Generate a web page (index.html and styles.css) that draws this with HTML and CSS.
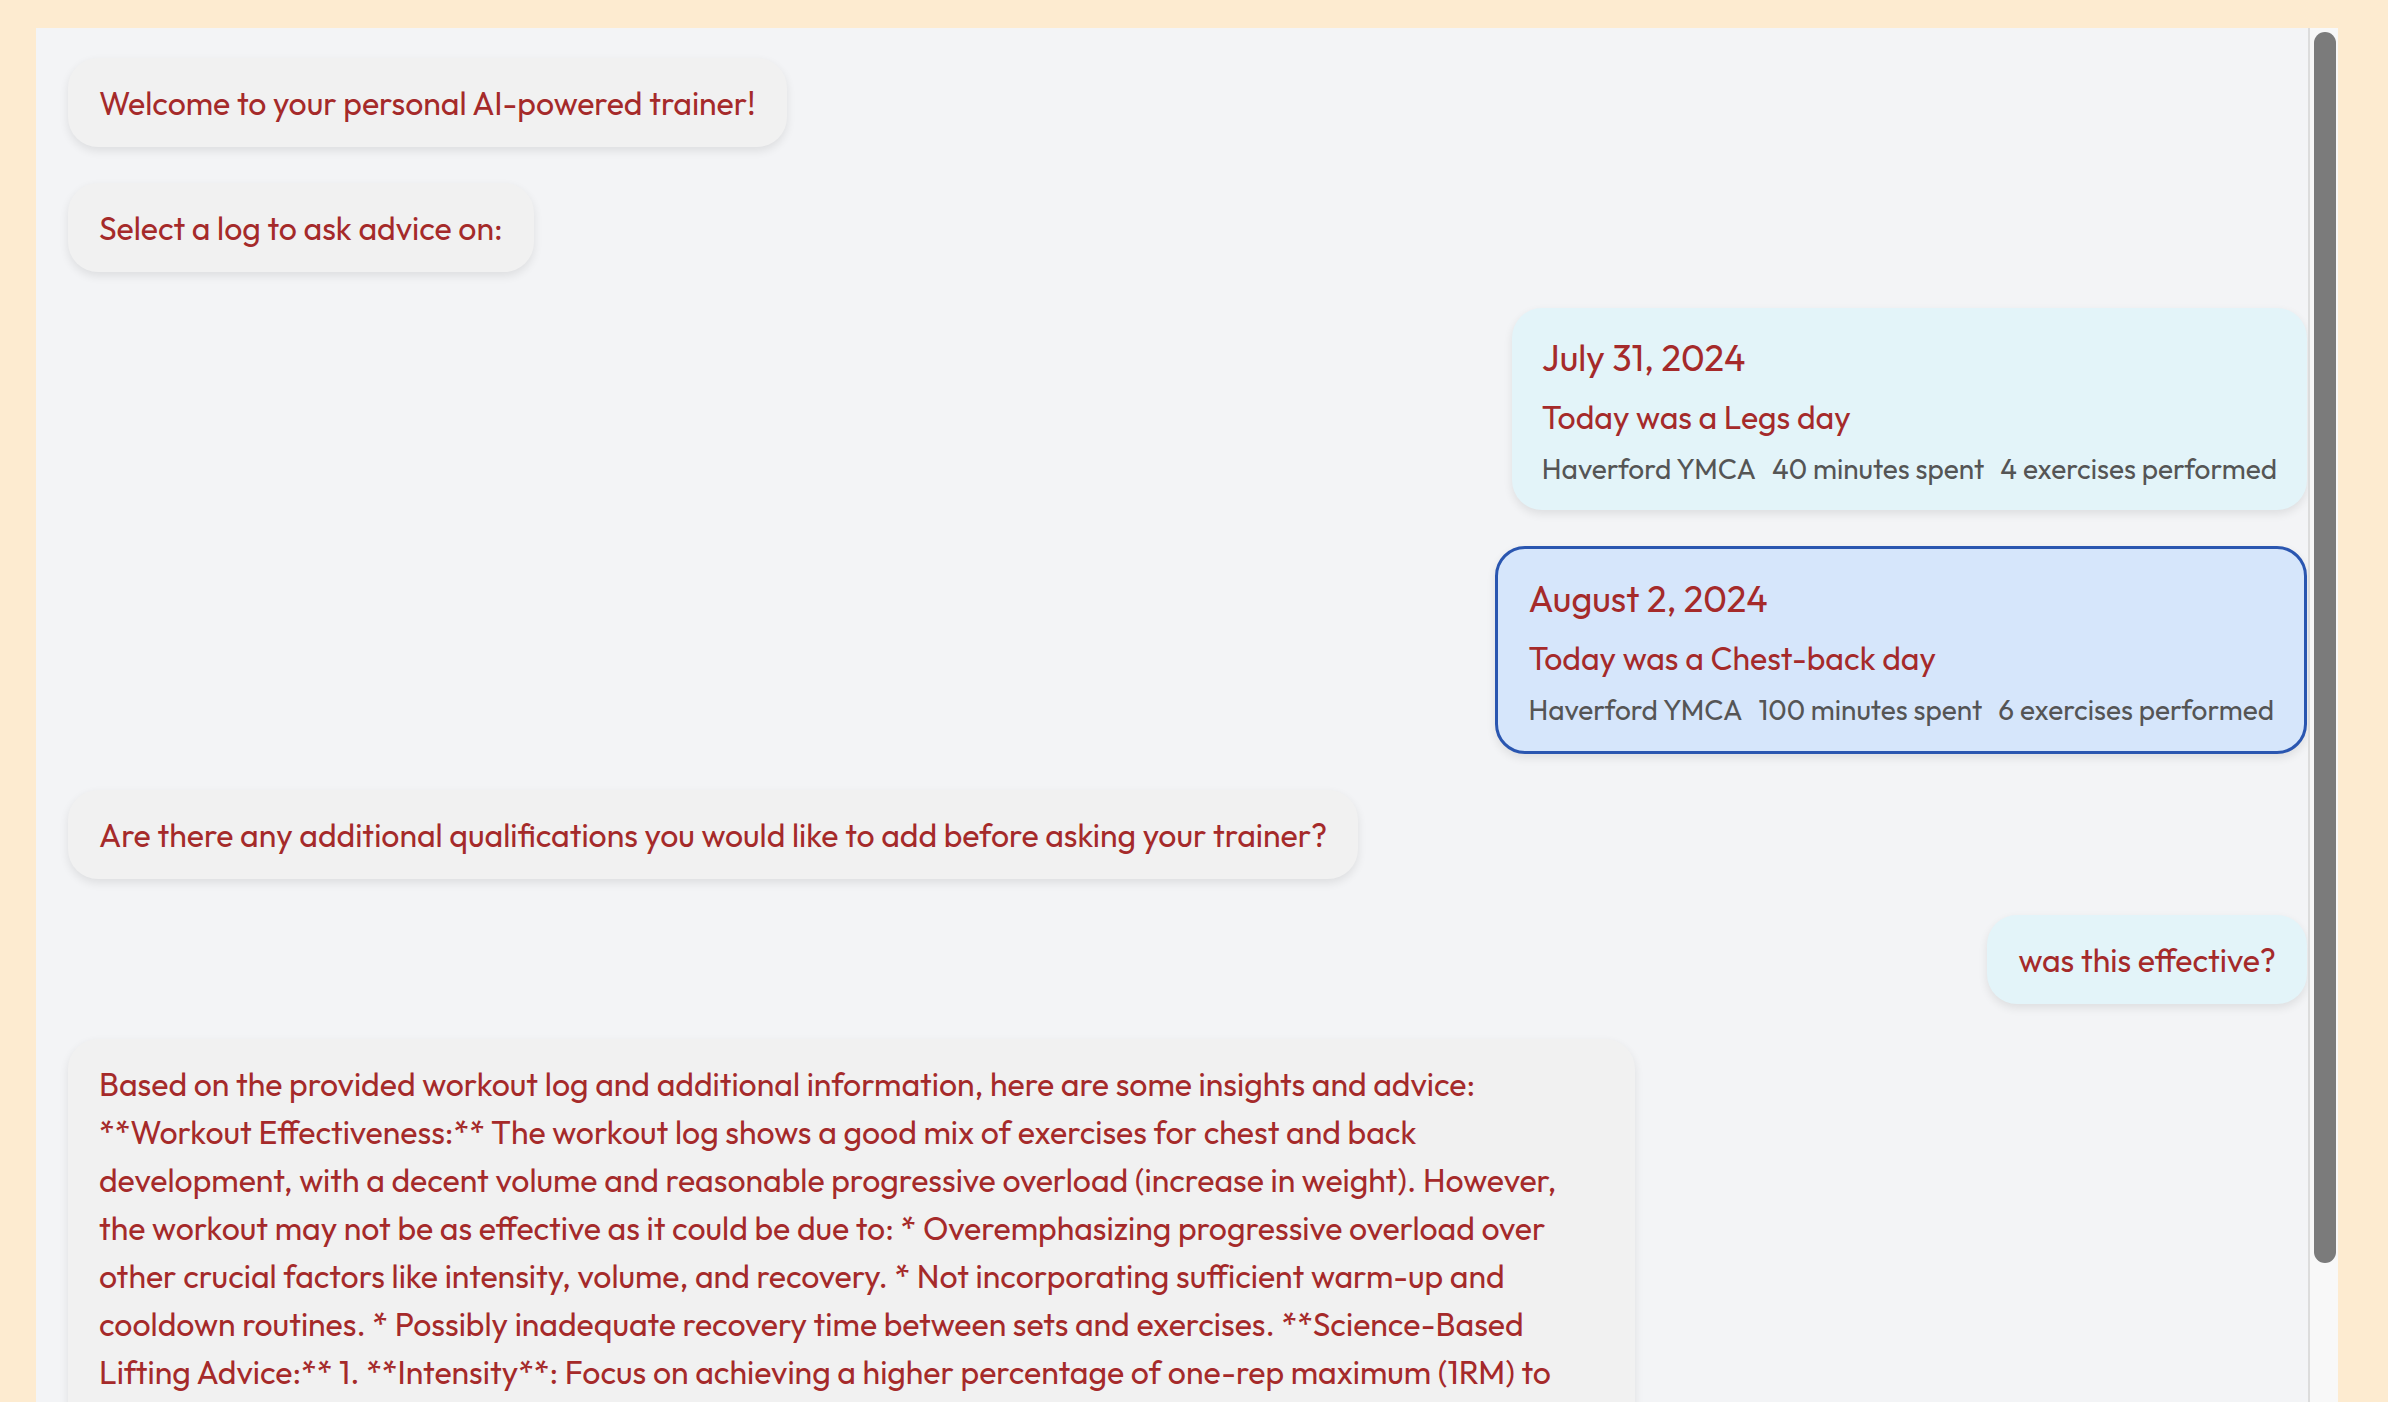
FILE: index.html
```html
<!DOCTYPE html>
<html lang="en">
<head>
<meta charset="utf-8">
<title>AI Trainer</title>
<link rel="stylesheet" href="styles.css">
</head>
<body>
<div class="panel">
  <div class="chat">
    <div class="msg bot">Welcome to your personal AI-powered trainer!</div>
    <div class="msg bot">Select a log to ask advice on:</div>
    <div class="log">
      <div class="log-date">July 31, 2024</div>
      <div class="log-title">Today was a Legs day</div>
      <div class="log-meta"><span>Haverford YMCA</span><span>40 minutes spent</span><span>4 exercises performed</span></div>
    </div>
    <div class="log selected">
      <div class="log-date">August 2, 2024</div>
      <div class="log-title">Today was a Chest-back day</div>
      <div class="log-meta"><span>Haverford YMCA</span><span>100 minutes spent</span><span>6 exercises performed</span></div>
    </div>
    <div class="msg bot">Are there any additional qualifications you would like to add before asking your trainer?</div>
    <div class="msg user">was this effective?</div>
    <div class="msg bot long">Based on the provided workout log and additional information, here are some insights and advice: **Workout Effectiveness:** The workout log shows a good mix of exercises for chest and back development, with a decent volume and reasonable progressive overload (increase in weight). However, the workout may not be as effective as it could be due to: * Overemphasizing progressive overload over other crucial factors like intensity, volume, and recovery. * Not incorporating sufficient warm-up and cooldown routines. * Possibly inadequate recovery time between sets and exercises. **Science-Based Lifting Advice:** 1. **Intensity**: Focus on achieving a higher percentage of one-rep maximum (1RM) to stimulate strength gains.</div>
  </div>
  <div class="scrollbar"><div class="thumb"></div></div>
</div>
</body>
</html>
```
FILE: styles.css
```css
html, body {
  margin: 0;
  height: 100%;
  overflow: hidden;
}
body {
  background: #fdebd0;
  font-family: "Outfit", "Lato", sans-serif;
  color: #a52a2a;
}
.panel {
  display: flex;
  margin: 28px 0 0 36px;
  width: 2302px;
  height: 1374px;
  background: #f3f4f6;
}
.chat {
  flex: 1;
  min-width: 0;
  overflow: hidden;
  padding: 30px 1px 0 32px;
  display: flex;
  flex-direction: column;
  align-items: flex-start;
  gap: 36px;
}
.msg {
  max-width: 70%;
  box-sizing: border-box;
  padding: 21px 31px 20px;
  font-size: 32px;
  line-height: 48px;
  border-radius: 30px;
  box-shadow: 0 4px 10px rgba(0, 0, 0, 0.09);
}
.bot {
  background: #f1f1f1;
}
.user {
  align-self: flex-end;
  background: #e3f4f9;
}
.long {
  margin-top: -1px;
}
.log {
  align-self: flex-end;
  padding: 28px 30px 20px;
  border-radius: 30px;
  background: #e3f4f9;
  box-shadow: 0 4px 10px rgba(0, 0, 0, 0.09);
}
.log.selected {
  background: #d6e6fb;
  border: 3px solid #2a56b0;
}
.log-date {
  font-size: 36px;
  line-height: 1.2;
  font-weight: 450;
  margin-bottom: 14px;
}
.log-title {
  font-size: 32px;
  line-height: 48px;
  margin-bottom: 7px;
}
.log-meta {
  display: flex;
  gap: 16px;
  font-size: 28px;
  line-height: 42px;
  color: #555;
}
.scrollbar {
  flex: none;
  width: 28px;
  border-left: 2px solid #dcdcdc;
  background: #f8f8f8;
}
.thumb {
  height: 1231px;
  margin: 4px 2px 0 4px;
  border-radius: 11px;
  background: #7b7b7b;
}
```
